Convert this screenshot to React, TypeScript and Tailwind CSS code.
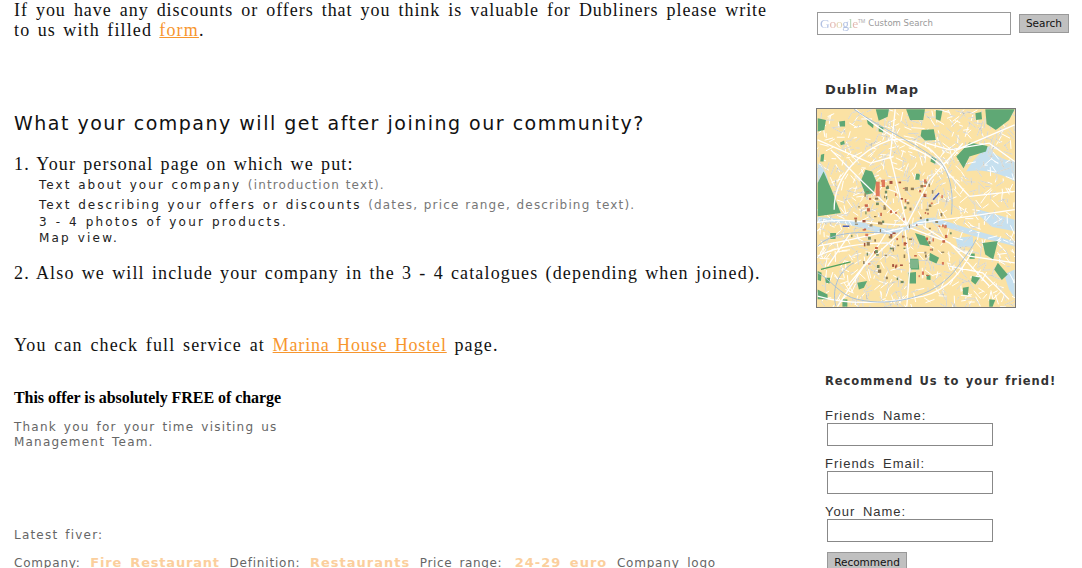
const verdana = "font-['DejaVu_Sans',sans-serif]";
const serif = "font-['Liberation_Serif',serif] text-[18px] leading-5 tracking-[1.15px] [word-spacing:1.5px] text-[#111]";

let seed = 12345;
const rnd = () => {
  seed = (seed * 1664525 + 1013904223) % 4294967296;
  return seed / 4294967296;
};

const thin: string[] = [];
for (let i = 0; i < 1100; i++) {
  const x = 20 + rnd() * 596;
  const y = 28 + rnd() * 594;
  const a = rnd() * Math.PI;
  const l = 10 + rnd() * 24;
  thin.push(`M${x.toFixed(0)} ${y.toFixed(0)}L${(x + Math.cos(a) * l).toFixed(0)} ${(y + Math.sin(a) * l).toFixed(0)}`);
}
const dots: { x: number; y: number; w: number; h: number; c: string }[] = [];
for (let i = 0; i < 130; i++) {
  const r = Math.sqrt(rnd()) * 160;
  const a = rnd() * Math.PI * 2;
  dots.push({
    x: 280 + Math.cos(a) * r,
    y: 385 + Math.sin(a) * r,
    w: 3 + rnd() * 7,
    h: 3 + rnd() * 8,
    c: ["#c8654a", "#8f7a55", "#d9785a", "#6f8a62", "#a5533f", "#9a8a68"][Math.floor(rnd() * 6)],
  });
}

const greens = [
  "196,28 236,28 232,50 205,62", "20,55 45,60 40,90 20,95", "85,65 103,62 103,80 88,80",
  "168,55 190,70 188,85 172,72", "205,78 220,82 218,98 205,95", "288,28 345,28 340,60 300,60",
  "378,30 398,32 392,62 378,58", "498,40 516,36 518,58 500,60", "528,28 617,28 600,60 560,90 532,72",
  "335,90 372,88 378,120 345,122 332,108", "364,170 380,176 376,192 362,186", "322,222 330,225 328,240 318,236",
  "440,170 480,128 535,138 530,155 480,170 462,205",
  "165,210 185,215 198,245 190,280 165,285 150,245", "20,250 38,215 62,270 90,340 20,350",
  "58,400 76,400 74,418 58,418", "315,400 345,410 360,440 330,435",
  "300,478 325,478 328,510 302,510", "295,520 318,518 318,552 298,552", "350,525 362,528 362,542 350,540",
  "360,460 388,475 380,492 358,482", "480,462 496,462 496,478 480,478", "520,430 566,424 552,480 528,465",
  "566,490 596,525 578,542 555,510", "488,530 512,535 498,555 485,545", "140,550 170,545 160,565 145,570",
  "460,565 478,562 475,588 460,585", "20,570 50,585 50,600 20,600", "95,600 110,600 110,622 95,622",
  "540,600 558,602 550,622 540,622", "20,515 32,520 30,545 20,542", "42,535 58,535 56,552 45,550",
  "30,165 40,162 38,185 28,185", "318,222 328,222 326,240 316,240", "88,128 100,122 102,132 90,136",
];

const water = [
  "M470 215C490 180 520 150 540 138C552 165 580 180 617 185V245C580 225 530 205 470 215Z",
  "M20 352C70 355 120 362 165 370C205 385 240 395 290 380C320 365 345 350 375 355C430 370 500 395 560 410L617 425V395L550 382L500 340L510 330L617 360V440L560 425C480 410 420 385 365 368C330 370 300 395 240 405C190 400 130 375 75 368L20 370Z",
  "M20 190C40 205 50 225 52 250L20 250Z",
  "M585 525L617 510V595L600 570Z",
  "M438 415L490 410L492 440L445 445Z",
];

const mains = [
  "M20 368C120 350 200 380 290 375", "M135 28C180 70 260 120 340 160C400 190 440 250 480 290",
  "M290 375L240 170L255 28", "M290 375L150 240L60 150", "M290 375L360 240L460 130", "M300 385L420 430L540 560",
  "M285 390L300 500L290 622", "M280 390L160 500L80 622", "M280 385L120 420L20 440", "M320 370L480 350L617 330",
  "M340 380L480 470L617 490", "M20 590C120 620 240 610 340 590C420 570 460 510 490 450",
  "M70 330C70 230 150 150 240 120C320 110 390 150 420 230", "M110 560C180 480 210 430 230 395",
  "M440 150L617 75", "M20 470C80 440 150 430 240 430", "M350 130L420 150L540 130L617 185", "M120 400L50 500",
  "M420 500L520 520L600 600", "M20 120L180 190L250 170", "M480 290L617 275",
];
const canals = [
  "M20 440C60 400 130 395 230 400", "M20 520C60 540 90 590 140 600C250 625 370 590 430 520C470 470 490 440 500 420",
  "M130 28C220 90 320 130 395 190C430 240 430 300 425 345", "M75 620C60 560 90 510 130 490",
];

function DublinMap() {
  return (
    <svg width={200} height={200} viewBox="18 27 600 596" preserveAspectRatio="none" className="block border border-[#777]">
      <defs>
        <filter id="soft"><feGaussianBlur stdDeviation="1" /></filter>
      </defs>
      <g filter="url(#soft)">
        <rect x={0} y={0} width={640} height={640} fill="#fbe2a4" />
        {water.map((d, i) => <path key={i} d={d} fill="#c6e0ef" />)}
        <path d={thin.join("")} stroke="#ffffff" strokeWidth={3} fill="none" />
        <path d={thin.slice(0, 550).join("")} stroke="#a9a898" strokeWidth={1.4} fill="none" />
        {greens.map((p, i) => <polygon key={i} points={p} fill="#5fa874" />)}
        <path d={mains.join("")} stroke="#ffffff" strokeWidth={4} fill="none" />
        <path d={canals.join("")} stroke="#a8bfd6" strokeWidth={3} fill="none" />
        <path d="M30 510L120 487" stroke="#4fa05e" strokeWidth={4} />
        {dots.map((d, i) => <rect key={i} x={d.x} y={d.y} width={d.w} height={d.h} fill={d.c} />)}
        <path d="M196 246h12v44h-12zM214 240h10v22h-10z" fill="#e0795a" />
        <path d="M300 480h24v26h-24z" fill="#7fb58b" />
        <path d="M370 300l18-20M96 380h20" stroke="#4f62b5" strokeWidth={5} />
      </g>
    </svg>
  );
}

function FriendField({ label, mt }: { label: string; mt: string }) {
  return (
    <div className={mt}>
      <div className="h-[15px] pl-[9px] font-['Liberation_Sans',sans-serif] text-[13px] leading-4 tracking-[1px] [word-spacing:3px] text-[#333]">{label}</div>
      <div className="ml-[11px] h-[23px] w-[166px] border border-[#888] bg-white" />
    </div>
  );
}

export default function App() {
  return (
    <div className="flex h-[568px] w-[1082px] overflow-hidden bg-white">
      <main className="ml-[14px] w-[753px] shrink-0">
        <p className={serif}>
          <span className="block text-justify tracking-[0.95px] [word-spacing:0px] [text-align-last:justify]">If you have any discounts or offers that you think is valuable for Dubliners please write</span>
          <span className="block"><span className="[word-spacing:1.7px]">to us with filled</span> <a className="text-[#f7962e] underline">form</a>.</span>
        </p>
        <h2 className={`${verdana} mt-[69px] text-[19px] font-normal leading-7 tracking-[1.5px] text-[#111]`}>
          What your company will get after joining our community?
        </h2>
        <p className={`mt-[17px] ${serif}`}>1. Your personal page on which we put:</p>
        <div className={`${verdana} ml-[25px] text-[12px] tracking-[2.05px] [word-spacing:0.8px] text-[#222]`}>
          <p className="mt-[3px] leading-4">Text about your company <span className="tracking-[1.15px] text-[#777]">(introduction text).</span></p>
          <p className="mt-1 leading-4">Text describing your offers or discounts <span className="tracking-[1.15px] text-[#777]">(dates, price range, describing text).</span></p>
          <p className="mt-px leading-4 tracking-[2.2px]">3 - 4 photos of your products.</p>
          <p className="leading-4 tracking-[2.2px]">Map view.</p>
        </div>
        <p className={`mt-[17px] ${serif}`}>2. Also we will include your company in the 3 - 4 catalogues (depending when joined).</p>
        <p className={`mt-[52px] ${serif} [word-spacing:2px]`}>You can check full service at <a className="tracking-[0.85px] text-[#f7962e] underline">Marina House Hostel</a> page.</p>
        <p className="mt-[33px] font-['Liberation_Serif',serif] text-[16px] font-bold leading-5 tracking-[-0.05px] text-black">This offer is absolutely FREE of charge</p>
        <div className={`${verdana} mt-3 text-[12px] leading-[15px] tracking-[1.2px] [word-spacing:2px] text-[#666]`}>
          <p>Thank you for your time visiting us</p>
          <p>Management Team.</p>
        </div>
        <p className={`${verdana} mt-[77px] text-[12px] leading-4 tracking-[1.2px] [word-spacing:2px] text-[#666]`}>Latest fiver:</p>
        <p className={`${verdana} mt-3 whitespace-nowrap text-[12px] leading-4 tracking-[0.8px] [word-spacing:5px] text-[#666]`}>
          Company: <b className="text-[13px] tracking-[0.8px] [word-spacing:3px] text-[#fbcf9d]">Fire Restaurant</b> Definition: <b className="text-[13px] tracking-[1px] text-[#fbcf9d]">Restaurants</b> <span className="tracking-[0.6px] [word-spacing:3px]">Price range:</span> <b className="ml-[3px] text-[13px] tracking-[1px] [word-spacing:3px] text-[#fbcf9d]">24-29 euro</b> <span className="[word-spacing:3px]">Company logo</span>
        </p>
      </main>
      <aside className="ml-[49px] w-[266px] shrink-0">
        <div className="mt-3 flex items-start">
          <div className="ml-px flex h-[23px] w-[194px] items-center border border-[#999] bg-white pl-[2px]">
            <span className="font-['Liberation_Serif',serif] text-[13.5px] leading-none tracking-[-0.3px] opacity-60">
              <span className="text-[#7f98d0]">G</span><span className="text-[#d08a7f]">o</span><span className="text-[#d0b97f]">o</span><span className="text-[#7f98d0]">g</span><span className="text-[#8cbc8c]">l</span><span className="text-[#d08a7f]">e</span>
            </span>
            <span className="mb-1 text-[5px] leading-none text-[#aaa]">TM</span>
            <span className="ml-[3px] font-['DejaVu_Sans',sans-serif] text-[8.5px] leading-none text-[#999]">Custom Search</span>
          </div>
          <div className="ml-2 mt-[2px] flex h-[19px] w-[50px] items-center justify-center border border-[#999] bg-[#c0c0c0] font-['DejaVu_Sans',sans-serif] text-[10.5px] text-[#111]">Search</div>
        </div>
        <h3 className={`${verdana} ml-[9px] mt-[47px] text-[13px] font-bold leading-4 tracking-[0.9px] [word-spacing:2px] text-[#333]`}>Dublin Map</h3>
        <div className="mt-[10px]"><DublinMap /></div>
        <h3 className={`${verdana} ml-[9px] mt-[65px] whitespace-nowrap text-[11.5px] font-bold leading-4 tracking-[0.95px] [word-spacing:1.5px] text-[#333]`}>Recommend Us to your friend!</h3>
        <FriendField label="Friends Name:" mt="mt-[19px]" />
        <FriendField label="Friends Email:" mt="mt-[10px]" />
        <FriendField label="Your Name:" mt="mt-[10px]" />
        <div className="ml-[11px] mt-[10px] flex h-[22px] w-[80px] items-center justify-center border border-[#999] bg-[#c0c0c0] font-['DejaVu_Sans',sans-serif] text-[10.5px] text-[#111]">Recommend</div>
      </aside>
    </div>
  );
}
